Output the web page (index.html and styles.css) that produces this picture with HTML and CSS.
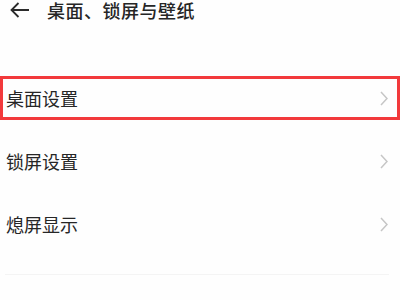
FILE: index.html
```html
<!DOCTYPE html>
<html lang="zh-CN">
<head>
    <meta charset="UTF-8">
    <title>桌面、锁屏与壁纸</title>
    <meta name="viewport" content="width=device-width, initial-scale=1.0">
    <link rel="stylesheet" href="styles.css">
</head>

<body>
    <header class="topbar">
        <svg class="back" width="20" height="16" viewBox="0 0 20 16">
            <path d="M19 8H1.5M8.5 1L1.5 8l7 7" fill="none" stroke="#2b2b2b" stroke-width="1.8"/>
        </svg>
        <h1>桌面、锁屏与壁纸</h1>
    </header>

    <main class="list">
        <a class="row row-marked" href="#">
            <span>桌面设置</span>
            <svg class="chevron" width="8" height="15" viewBox="0 0 8 15"><path d="M1 1l6 6.5-6 6.5" fill="none" stroke="#c6c6c6" stroke-width="1.5"/></svg>
        </a>
        <a class="row" href="#">
            <span>锁屏设置</span>
            <svg class="chevron" width="8" height="15" viewBox="0 0 8 15"><path d="M1 1l6 6.5-6 6.5" fill="none" stroke="#c6c6c6" stroke-width="1.5"/></svg>
        </a>
        <a class="row" href="#">
            <span>熄屏显示</span>
            <svg class="chevron" width="8" height="15" viewBox="0 0 8 15"><path d="M1 1l6 6.5-6 6.5" fill="none" stroke="#c6c6c6" stroke-width="1.5"/></svg>
        </a>
        <hr class="divider">
    </main>
</body>
</html>
```

FILE: styles.css
```css
html {
    font-family: "Noto Sans CJK SC", "Noto Sans", sans-serif;
    background-color: #fefefe;
    color: #262626;
}

body {
    margin: 0;
}

.topbar {
    display: flex;
    align-items: center;
    height: 22px;
    padding-left: 10px;
}

.back {
    flex: none;
    margin-top: -3px;
}

h1 {
    margin: -3px 0 0 17px;
    font-size: 18px;
    font-weight: 500;
    line-height: 22px;
    letter-spacing: 0.5px;
}

.list {
    display: flex;
    flex-direction: column;
    gap: 19px;
    padding-top: 54px;
}

.row {
    display: flex;
    align-items: center;
    justify-content: space-between;
    box-sizing: border-box;
    height: 44px;
    padding: 0 10px 0 4px;
    border: 2px solid transparent;
    color: inherit;
    text-decoration: none;
    font-size: 18px;
}

.row-marked {
    border: 3px solid #f2393b;
    padding-left: 3px;
    padding-right: 9px;
}

.divider {
    margin: 9px 11px 0 5px;
    border: none;
    border-top: 1px solid #f4f4f4;
}
```
